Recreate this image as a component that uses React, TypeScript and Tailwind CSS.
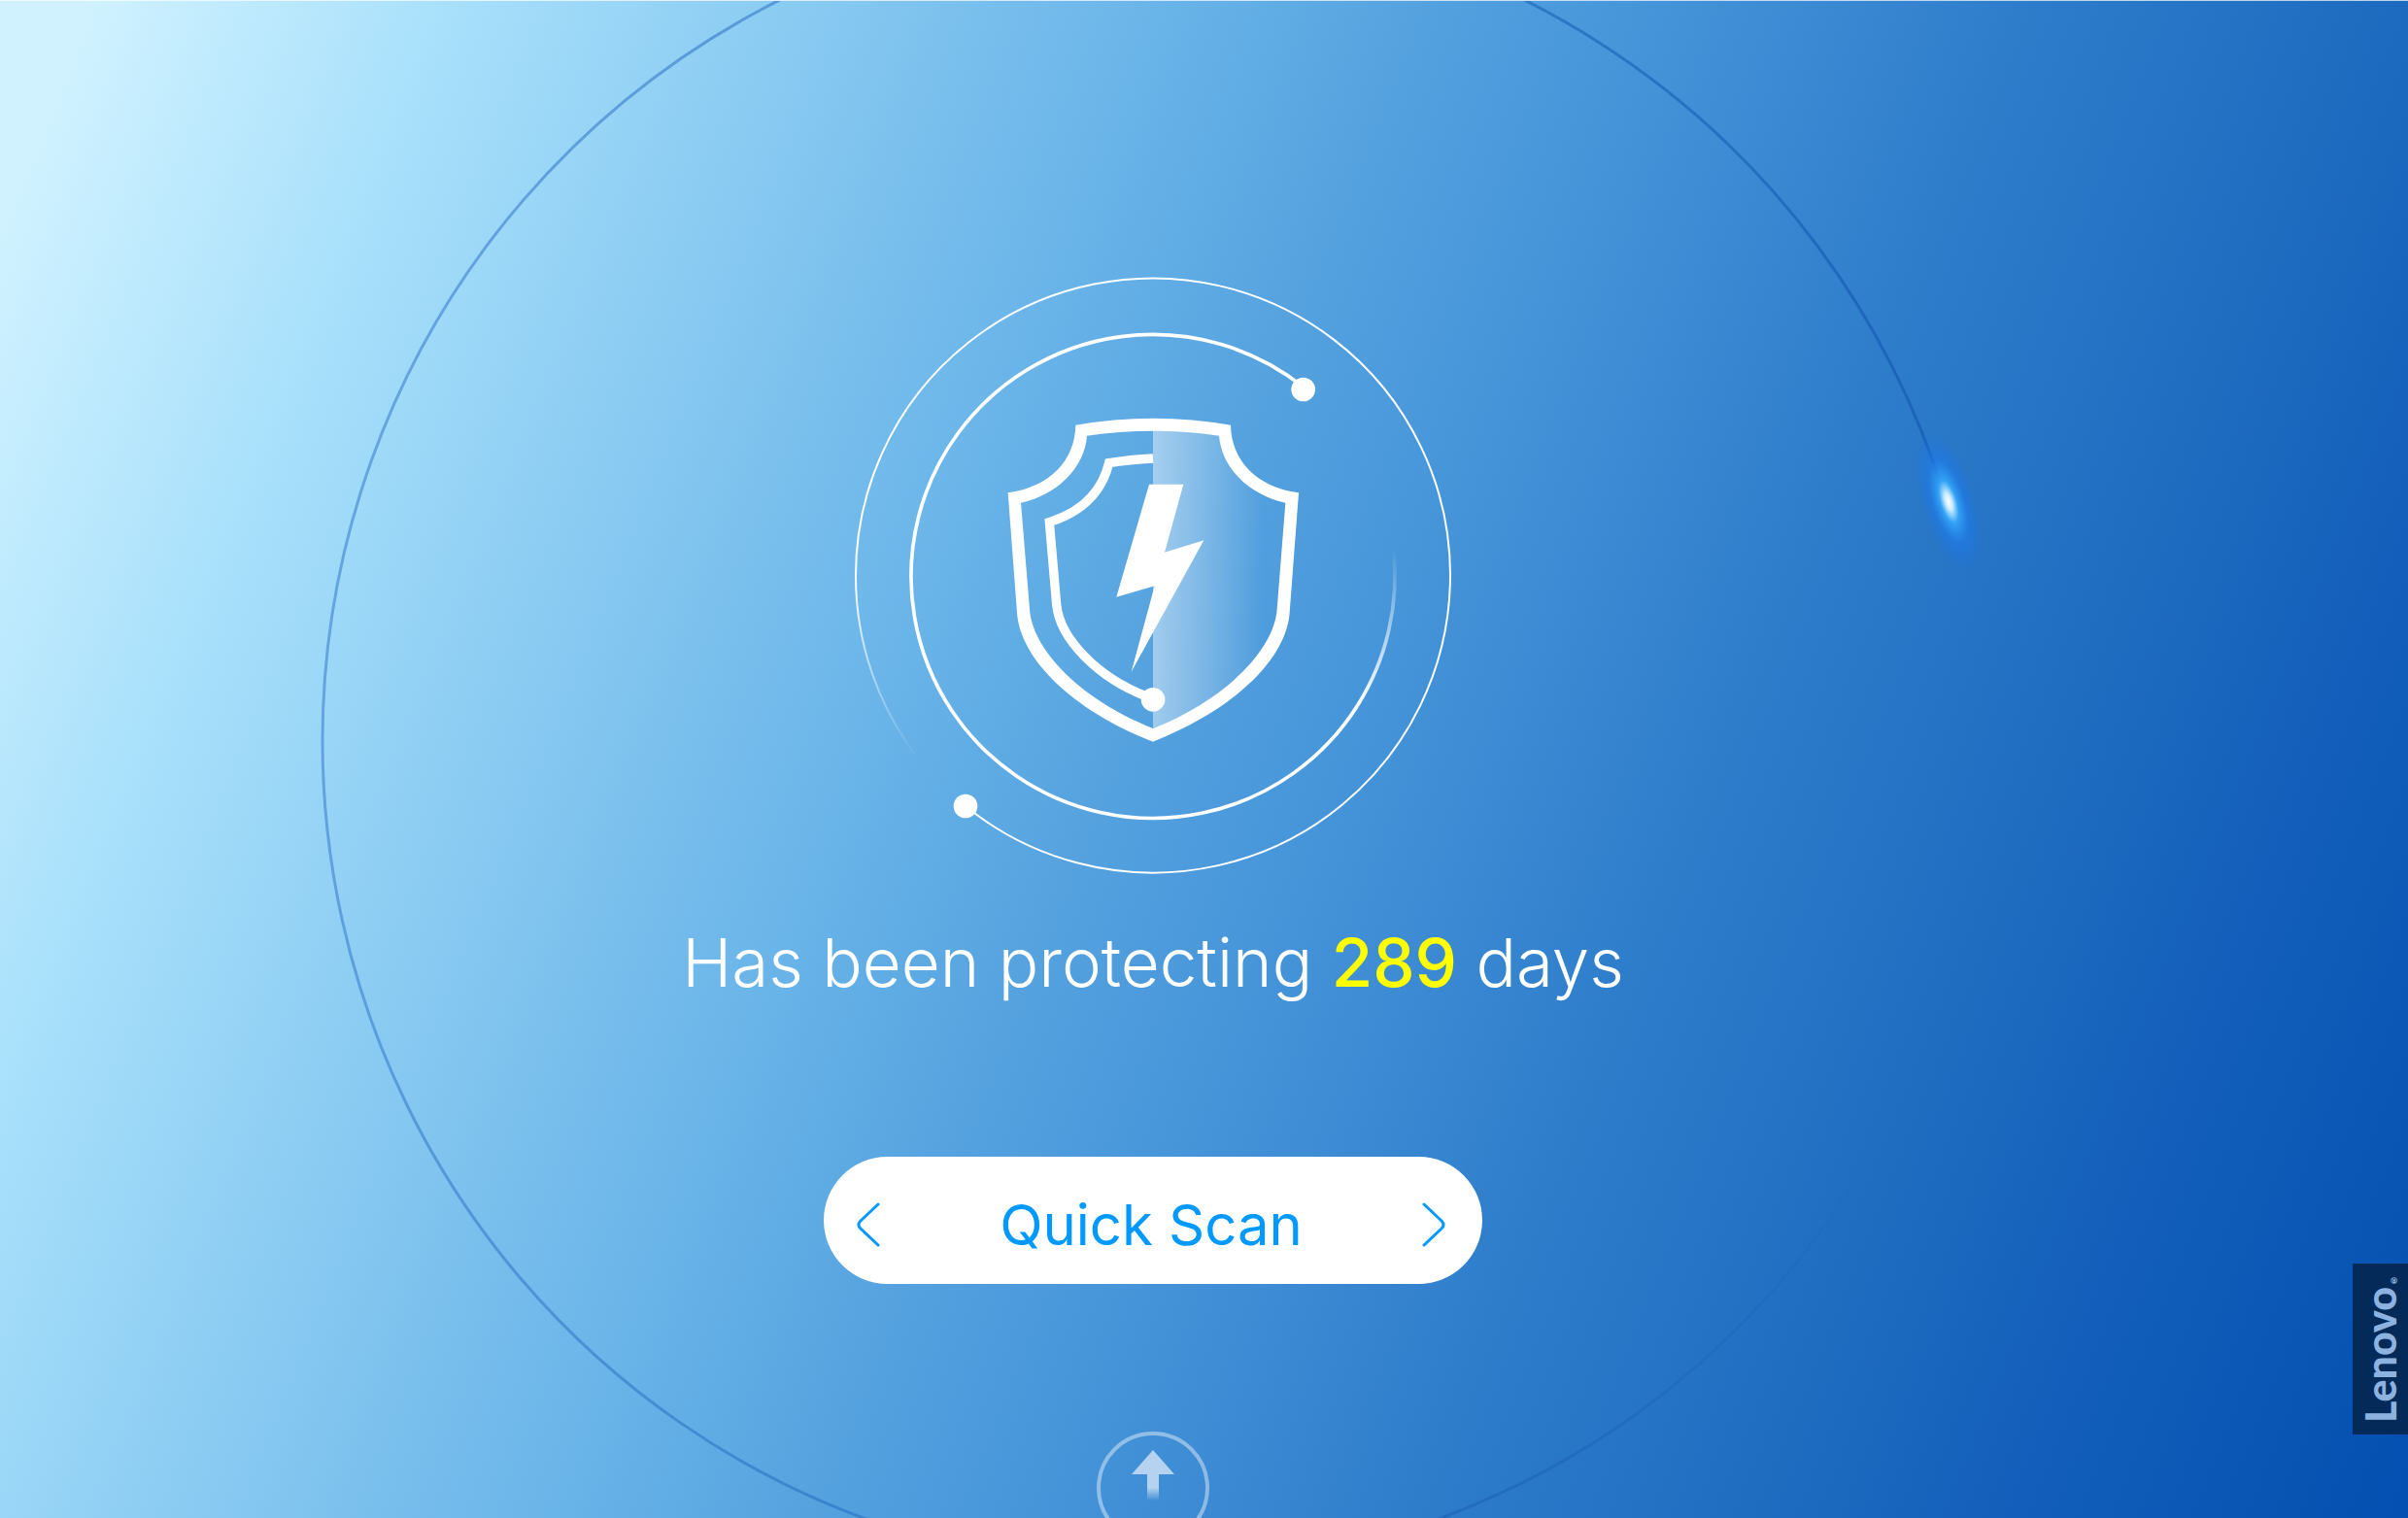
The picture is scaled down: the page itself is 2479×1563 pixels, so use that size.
import React from 'react';

const EMBLEM_SHIELD =
  'M324 81 Q563 39 803 81 C805 190 882 272 1013 290 L985 660 C976 800 816 960 563 1059 C310 960 152 800 143 660 L115 290 C245 272 322 190 324 81 Z ' +
  'M359 114 C352 210 270 296 155 321 L182 650 C190 770 330 925 563 1018 C796 925 938 770 946 650 L972 321 C856 296 774 210 767 114 Q563 84 359 114 Z';

function Orbit() {
  return (
    <svg
      aria-hidden="true"
      viewBox="0 0 2479 1563"
      preserveAspectRatio="xMidYMid slice"
      className="absolute inset-0 h-full w-full"
    >
      <defs>
        <linearGradient id="orbitLine" gradientUnits="userSpaceOnUse" x1="332" y1="0" x2="2005" y2="0">
          <stop offset="0" stopColor="#2c70c8" stopOpacity="0.5" />
          <stop offset="0.6" stopColor="#1c62b8" stopOpacity="0.55" />
          <stop offset="1" stopColor="#0f55b0" stopOpacity="0.6" />
        </linearGradient>
        <linearGradient id="orbitTail" gradientUnits="userSpaceOnUse" x1="1490" y1="1560" x2="1941" y2="1161">
          <stop offset="0" stopColor="#1a60b7" stopOpacity="0.55" />
          <stop offset="1" stopColor="#0f55b0" stopOpacity="0" />
        </linearGradient>
        <radialGradient id="glow">
          <stop offset="0" stopColor="#ffffff" />
          <stop offset="0.12" stopColor="#c8ecff" />
          <stop offset="0.3" stopColor="#32a4f8" stopOpacity="0.95" />
          <stop offset="0.6" stopColor="#1f7ae6" stopOpacity="0.65" />
          <stop offset="1" stopColor="#1c70de" stopOpacity="0" />
        </radialGradient>
      </defs>
      <g fill="none" strokeWidth="3">
        <path d="M2003 514 A854 854 0 0 0 332 762 A854 854 0 0 0 1490 1560" stroke="url(#orbitLine)" />
        <path d="M1490 1560 A854 854 0 0 0 1941 1161" stroke="url(#orbitTail)" />
      </g>
      <ellipse cx="2006" cy="516" rx="28" ry="76" fill="url(#glow)" transform="rotate(-17 2006 516)" />
    </svg>
  );
}

function Emblem() {
  return (
    <svg role="img" aria-label="Protected" viewBox="-367 -383 1860 1860" className="h-[620px] w-[620px] shrink-0">
      <defs>
        <linearGradient id="outerFade" gradientUnits="userSpaceOnUse" x1="0" y1="547" x2="0" y2="1116">
          <stop offset="0" stopColor="#fff" />
          <stop offset="1" stopColor="#fff" stopOpacity="0" />
        </linearGradient>
        <linearGradient id="innerFade" gradientUnits="userSpaceOnUse" x1="0" y1="948" x2="0" y2="462">
          <stop offset="0" stopColor="#fff" />
          <stop offset="1" stopColor="#fff" stopOpacity="0" />
        </linearGradient>
        <linearGradient id="shieldShade" gradientUnits="userSpaceOnUse" x1="563" y1="0" x2="900" y2="0">
          <stop offset="0" stopColor="#fff" stopOpacity="0.45" />
          <stop offset="1" stopColor="#fff" stopOpacity="0" />
        </linearGradient>
      </defs>

      {/* rings */}
      <g fill="none" stroke="#fff">
        <path strokeWidth="6" d="M-16 1258 A918 918 0 1 0 -355 547" />
        <path strokeWidth="6" stroke="url(#outerFade)" d="M-355 547 A918 918 0 0 0 -158 1116" />
        <path strokeWidth="11" d="M1027 -37 A747 747 0 1 0 1194 948" />
        <path strokeWidth="11" stroke="url(#innerFade)" d="M1194 948 A747 747 0 0 0 1305 462" />
      </g>
      <circle cx="1027" cy="-29" r="37" fill="#fff" />
      <circle cx="-16" cy="1258" r="37" fill="#fff" />

      {/* shield */}
      <path fill="url(#shieldShade)" d="M563 99 Q670 99 767 114 C774 210 856 296 972 321 L946 650 C938 770 796 925 563 1018 Z" />
      <path fill="#fff" fillRule="evenodd" d={EMBLEM_SHIELD} />
      <path
        fill="none"
        stroke="#fff"
        strokeWidth="28"
        d="M563 184 Q490 188 427 198 C405 290 340 350 243 381 L265 635 C275 740 390 860 545 920"
      />
      <circle cx="563" cy="929" r="37" fill="#fff" />
      <path fill="#fff" d="M551 264 H657 L599 474 L720 437 L496 843 L568 578 L450 612 Z" />
    </svg>
  );
}

interface ChevronProps {
  direction: 'left' | 'right';
}

function Chevron({ direction }: ChevronProps) {
  return (
    <svg aria-hidden="true" viewBox="0 0 24 48" fill="none" stroke="#0099ff" strokeWidth="3" strokeLinecap="round" className="h-12 w-6">
      <path d={direction === 'left' ? 'M22 3 L4 20 Q0 24 4 28 L22 45' : 'M2 3 L20 20 Q24 24 20 28 L2 45'} />
    </svg>
  );
}

function ScanSelector() {
  return (
    <div className="mt-[160px] flex h-[131px] w-[678px] shrink-0 items-center justify-between rounded-full bg-white pt-2 pr-[38px] pl-[34px]">
      <button type="button" aria-label="Previous scan mode">
        <Chevron direction="left" />
      </button>
      <button type="button" className="text-[58px] leading-[72px] text-[#0099ff]">
        Quick Scan
      </button>
      <button type="button" aria-label="Next scan mode">
        <Chevron direction="right" />
      </button>
    </div>
  );
}

function PullUpButton() {
  return (
    <button type="button" aria-label="More" className="mt-[152px] shrink-0">
      <svg aria-hidden="true" viewBox="0 0 116 116" className="h-[116px] w-[116px]">
        <defs>
          <linearGradient id="stemFade" x1="0" y1="0" x2="0" y2="1">
            <stop offset="0.5" stopColor="#b5d3f0" />
            <stop offset="1" stopColor="#b5d3f0" stopOpacity="0" />
          </linearGradient>
        </defs>
        <circle cx="58" cy="58" r="56" fill="none" stroke="#fff" strokeOpacity="0.42" strokeWidth="4" />
        <path fill="#b5d3f0" d="M58 19 L80 44 H36 Z" />
        <rect x="52" y="44" width="12" height="27" fill="url(#stemFade)" />
      </svg>
    </button>
  );
}

export default function App() {
  return (
    <div className="relative flex h-screen overflow-hidden border-t border-white/70 bg-[linear-gradient(112deg,#d0f2ff_0%,#d0f2ff_3%,#a8e0fb_15%,#80c4ef_30%,#68b3e8_39%,#55a2df_47%,#4796da_54%,#3a88d2_61%,#2e7dcb_67%,#1f6dc1_78%,#125eba_87%,#0754b3_96%,#044fb2_100%)] bg-origin-border font-['Inter','Liberation_Sans',sans-serif]">
      <Orbit />
      <main className="relative flex flex-1 flex-col items-center pt-[282px]">
        <Emblem />
        <p className="mt-12 shrink-0 text-[69px] leading-[80px] font-light whitespace-nowrap text-white">
          Has been protecting <strong className="font-medium text-[#ffff00]">289</strong> days
        </p>
        <ScanSelector />
        <PullUpButton />
      </main>
      <aside className="relative flex w-[105px] flex-col items-end justify-end pb-[86px]">
        <div className="flex h-[176px] w-[57px] rotate-180 items-center justify-center bg-[#042a5a] font-['Lato'] text-[43px] leading-[57px] font-black text-[#8db2df] [writing-mode:vertical-rl]">
          Lenovo<span className="self-end text-[9px] leading-[28px]">®</span>
        </div>
      </aside>
    </div>
  );
}
